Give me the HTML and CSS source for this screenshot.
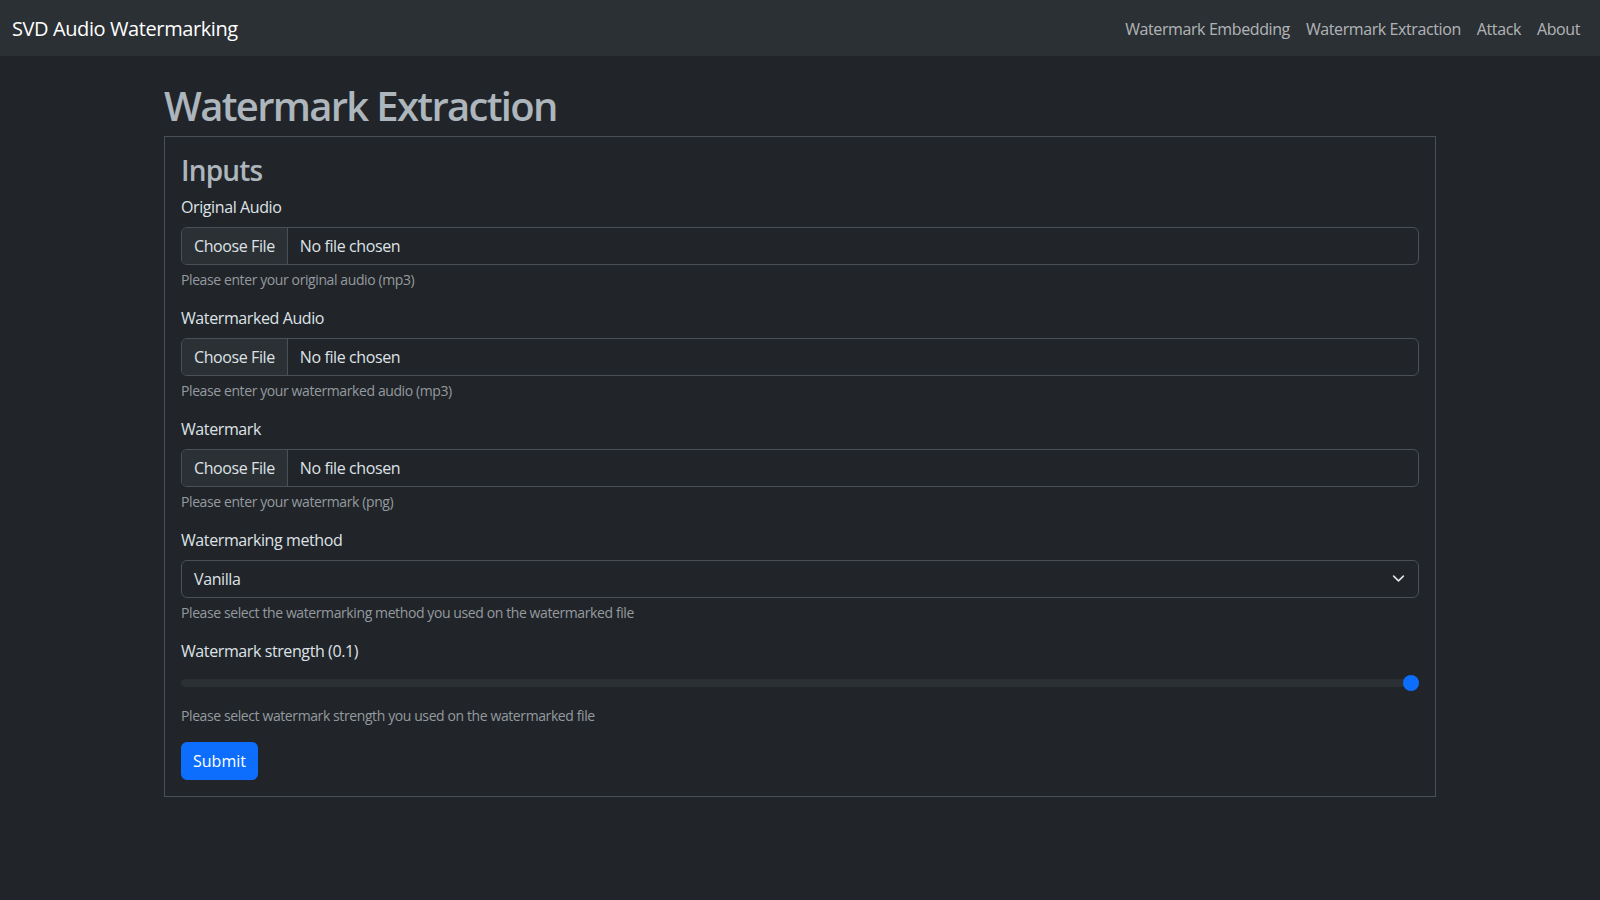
FILE: index.html
```html
<!DOCTYPE html>
<html lang="en">
<head>
<meta charset="utf-8">
<title>SVD Audio Watermarking</title>
<link rel="stylesheet" href="styles.css">
</head>
<body>
<nav class="navbar">
  <a class="brand" href="#">SVD Audio Watermarking</a>
  <ul class="nav">
    <li><a class="nav-link" href="#">Watermark Embedding</a></li>
    <li><a class="nav-link" href="#">Watermark Extraction</a></li>
    <li><a class="nav-link" href="#">Attack</a></li>
    <li><a class="nav-link" href="#">About</a></li>
  </ul>
</nav>
<main class="container">
  <h1 class="title">Watermark Extraction</h1>
  <form class="panel">
    <h3 class="panel-title">Inputs</h3>
    <div class="group">
      <div class="label">Original Audio</div>
      <div class="file"><span class="file-btn">Choose File</span><span class="file-name">No file chosen</span></div>
      <div class="help">Please enter your original audio (mp3)</div>
    </div>
    <div class="group">
      <div class="label">Watermarked Audio</div>
      <div class="file"><span class="file-btn">Choose File</span><span class="file-name">No file chosen</span></div>
      <div class="help">Please enter your watermarked audio (mp3)</div>
    </div>
    <div class="group">
      <div class="label">Watermark</div>
      <div class="file"><span class="file-btn">Choose File</span><span class="file-name">No file chosen</span></div>
      <div class="help">Please enter your watermark (png)</div>
    </div>
    <div class="group">
      <div class="label">Watermarking method</div>
      <div class="select"><span>Vanilla</span>
        <svg class="chev" width="16" height="16" viewBox="0 0 16 16"><path d="M2 5l6 6 6-6" fill="none" stroke="#dee2e6" stroke-width="2" stroke-linecap="round" stroke-linejoin="round"/></svg>
      </div>
      <div class="help">Please select the watermarking method you used on the watermarked file</div>
    </div>
    <div class="group">
      <div class="label">Watermark strength (0.1)</div>
      <input class="range" type="range" min="0" max="1" step="0.1" value="1">
      <div class="help help-range">Please select watermark strength you used on the watermarked file</div>
    </div>
    <button class="submit" type="button">Submit</button>
  </form>
</main>
</body>
</html>
```
FILE: styles.css
```css
* { box-sizing: border-box; }
html, body { margin: 0; padding: 0; }
body {
  background: #212529;
  color: #dee2e6;
  font-family: "Open Sans", "Noto Sans", sans-serif;
  font-size: 16px;
  line-height: 1.5;
  letter-spacing: -0.025em;
}
.navbar {
  height: 56px;
  background: #2b3035;
  display: flex;
  align-items: center;
  justify-content: space-between;
  padding: 9px 12px 7px;
}
.brand {
  color: #fff;
  text-decoration: none;
  font-size: 20px;
  line-height: 30px;
  padding: 5px 0;
}
.nav {
  list-style: none;
  margin: 0;
  padding: 0;
  display: flex;
}
.nav-link {
  display: block;
  padding: 8px;
  color: rgba(255,255,255,0.65);
  text-decoration: none;
}
.container {
  width: 1272px;
  margin: 24px auto 0;
}
.title {
  margin: 0 0 6px;
  padding-top: 2px;
  font-size: 40px;
  font-weight: 600;
  line-height: 1.2;
  color: #adb5bd;
  letter-spacing: -0.042em;
}
.panel {
  border: 1px solid #495057;
  padding: 16px;
}
.panel-title {
  margin: 0 0 7px;
  padding-top: 1px;
  font-size: 28px;
  font-weight: 600;
  line-height: 1.2;
  color: #adb5bd;
  letter-spacing: -0.03em;
}
.group { margin-bottom: 16px; }
.label { margin-bottom: 8px; }
.file, .select {
  display: flex;
  height: 38px;
  border: 1px solid #495057;
  border-radius: 6px;
  background: #212529;
  overflow: hidden;
}
.file-btn {
  background: #2b3035;
  border-right: 1px solid #495057;
  padding: 6px 12px;
  color: #dee2e6;
}
.file-name { padding: 6px 12px; }
.select {
  align-items: center;
  justify-content: space-between;
  padding: 6px 12px;
}
.chev { width: 13px; height: 13px; margin-right: 1px; }
.help {
  margin-top: 4px;
  font-size: 14px;
  color: #949a9f;
}
.help-range { margin-top: 10px; }
.range {
  display: block;
  width: 100%;
  height: 24px;
  margin: 0;
  padding: 0;
  background: transparent;
  -webkit-appearance: none;
  appearance: none;
}
.range::-webkit-slider-runnable-track {
  height: 8px;
  border-radius: 16px;
  background: #2b3035;
}
.range::-webkit-slider-thumb {
  -webkit-appearance: none;
  appearance: none;
  width: 16px;
  height: 16px;
  margin-top: -4px;
  border-radius: 50%;
  border: 0;
  background: #0d6efd;
}
.submit {
  display: block;
  height: 38px;
  padding: 6px 12px;
  border: 0;
  border-radius: 6px;
  background: #0d6efd;
  color: #fff;
  font: inherit;
}
```
